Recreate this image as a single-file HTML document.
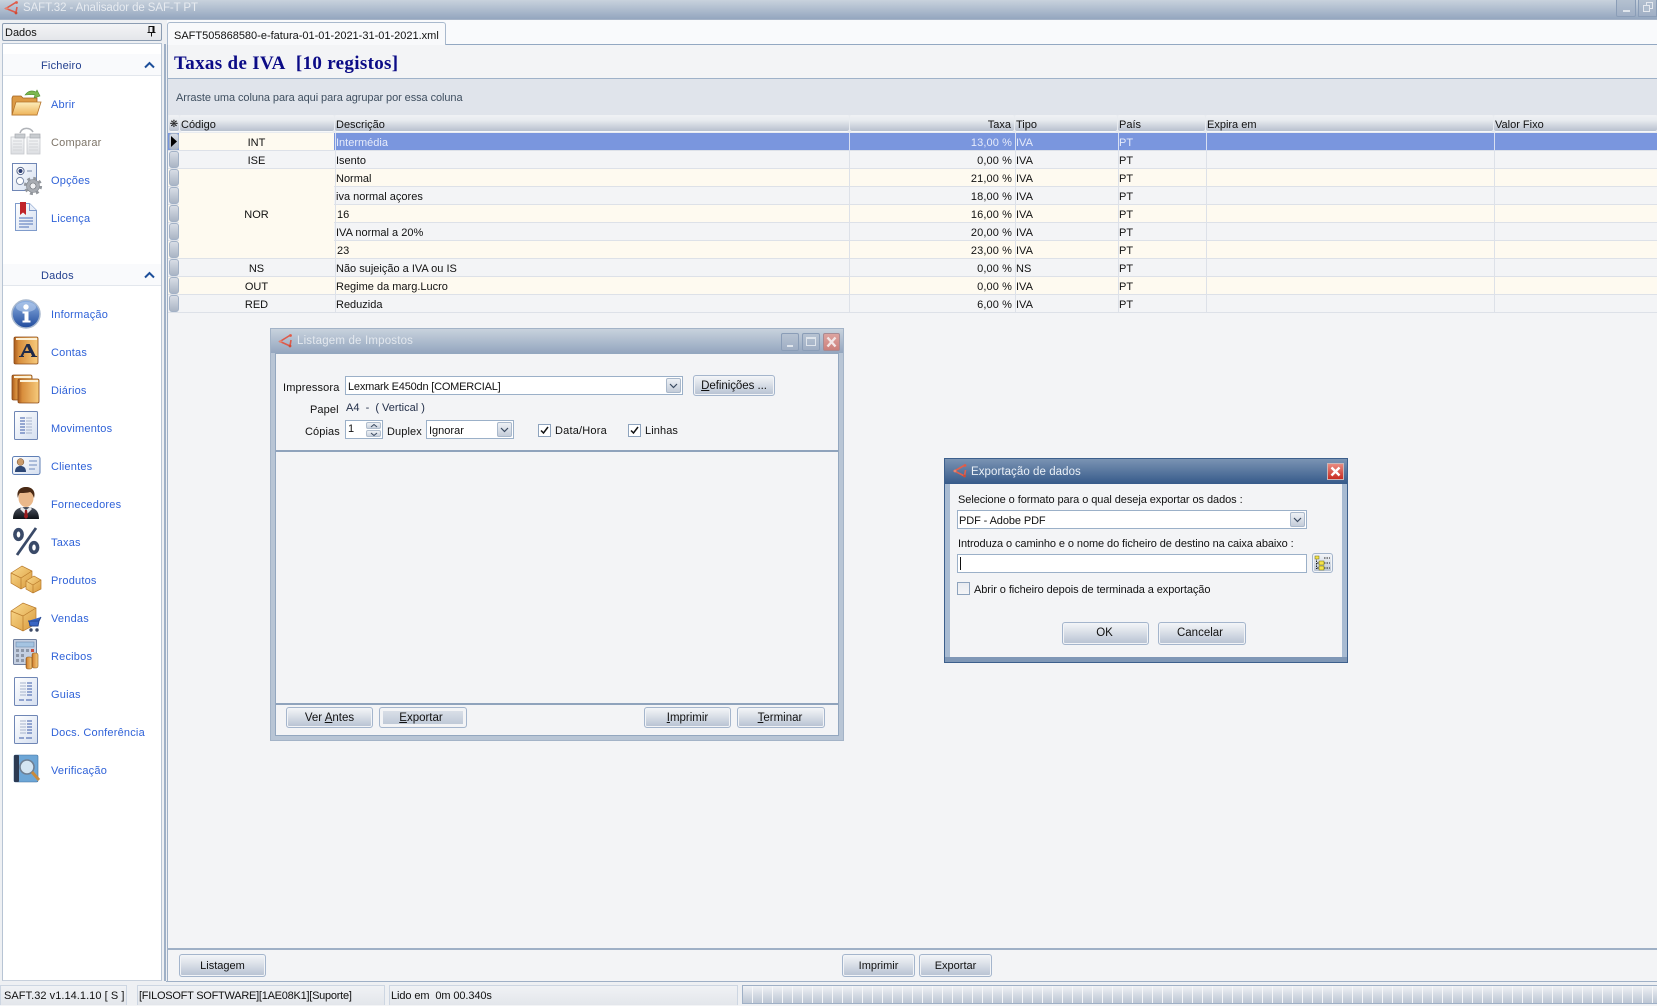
<!DOCTYPE html>
<html lang="pt"><head><meta charset="utf-8"><title>SAFT.32 - Analisador de SAF-T PT</title>
<style>
*{box-sizing:border-box}
html,body{margin:0;padding:0;width:1657px;height:1005px;overflow:hidden;background:#f3f4f6;font-family:"Liberation Sans",sans-serif;font-size:11px;color:#111}
.a{position:absolute}
.t{position:absolute;white-space:nowrap;line-height:14px}
.nav{position:absolute;left:51px;white-space:nowrap;line-height:14px;font-size:11px;letter-spacing:.2px;color:#2f62d8}
.hd{position:absolute;left:3px;width:158px;height:22px;background:#f9fafc;border-bottom:1px solid #e3e7ed}
.hdt{position:absolute;left:41px;white-space:nowrap;line-height:14px;font-size:11px;letter-spacing:.2px;color:#23408f}
.btn{position:absolute;border:1px solid #a4b5cc;border-radius:3px;background:linear-gradient(#f3f5f8,#dfe4eb 35%,#b6c1d2);box-shadow:inset 0 0 0 1px #f2f4f7;text-align:center;color:#111;white-space:nowrap;font-size:11.5px}
.btn u{text-decoration:underline}
.cmb{position:absolute;background:#fff;border:1px solid #9bb0c8;letter-spacing:-.2px}
.arr{position:absolute;right:1px;top:1px;bottom:1px;width:15px;border:1px solid #a9b8cb;border-radius:2px;background:linear-gradient(#eef1f5,#c3ccd9)}
.chk{position:absolute;width:13px;height:13px;border:1px solid #8ea3bd;background:#fff}
.hc{position:absolute;top:115px;height:17px;background:linear-gradient(#f0f2f5,#e8ebef 30%,#b4bdcb);border-radius:2px;line-height:20px;padding-left:1px;white-space:nowrap;color:#111;font-size:11px;box-shadow:0 -1px 0 #f7f8fa inset}
.r{position:absolute;left:168px;width:1489px;height:18px;border-bottom:1px solid #dde1e8;line-height:20px;white-space:nowrap;background:#f3f4f6}
.r.c{background:#fefaf0}
.r.s{background:#7a96de;color:#e6ebfa;border-bottom-color:#dde1e8}
.r i{position:absolute;top:0;bottom:-1px;width:1px;background:#dde1e8}
.r.s i{background:#d9e0f2}
.r span{position:absolute;top:0}
.sel{position:absolute;left:1px;top:0;width:10px;height:17px;background:linear-gradient(#d8dde5,#aab5c5);border:1px solid #a2b1c6;border-radius:3px}
.v1{left:167px}.v2{left:681px;}.v3{right:auto;left:847px}.v4{left:950px}.v5{left:1038px}.v6{left:1326px}
.taxa{left:682px;width:162px;text-align:right;letter-spacing:.1px}
.cod{position:absolute;left:11px;width:155px;top:0;height:17px;background:#fefaf0;text-align:center;color:#111}
.cg{background:#f3f4f6}
.st{position:absolute;top:985px;height:20px;background:linear-gradient(#f0f2f5,#e3e6eb);border:1px solid #cdd6e2;border-bottom:0;line-height:20px;white-space:nowrap;padding-left:3px;color:#111;font-size:11px}
</style></head><body>

<!-- main title bar -->
<div class="a" style="left:0;top:0;width:1657px;height:20px;background:linear-gradient(#c8d2dd,#94a6bf);border-bottom:1px solid #a5b3c6"></div>
<svg class="a" style="left:4px;top:0" width="16" height="16" viewBox="0 0 16 16"><path d="M12.5 2 L2 8.5 L12 12.5 L13 7" fill="none" stroke="#dd5a4a" stroke-width="1.6"/><circle cx="12.5" cy="2.5" r="1.4" fill="#e25a45"/><circle cx="2.5" cy="8.5" r="1.4" fill="#e8836e"/><circle cx="12" cy="13" r="1.4" fill="#d04a35"/></svg>
<div class="t" style="left:23px;top:1px;color:#e7ebf0;font-size:11.5px;letter-spacing:-.1px">SAFT.32 - Analisador de SAF-T PT</div>
<div class="a" style="left:1616px;top:0;width:20px;height:17px;border:1px solid #8a9db7;border-top:0;border-radius:0 0 2px 2px;background:linear-gradient(#b4c1d0,#a0afc5)"><div class="a" style="left:6px;top:10px;width:7px;height:2px;background:#dfe5ec"></div></div>
<div class="a" style="left:1638px;top:0;width:19px;height:17px;border:1px solid #8a9db7;border-top:0;background:linear-gradient(#b4c1d0,#a0afc5)"><div class="a" style="left:7px;top:2px;width:7px;height:7px;border:1px solid #e5e9ef"></div><div class="a" style="left:4px;top:5px;width:7px;height:7px;border:1px solid #e5e9ef;background:#aebccd"></div></div>

<!-- left strip -->
<div class="a" style="left:0;top:20px;width:167px;height:965px;background:#eef0f3"></div>
<div class="a" style="left:2px;top:23px;width:160px;height:18px;border:1px solid #8b9cb2;border-radius:2px;background:linear-gradient(#f3f4f6,#e4e6ea)"></div>
<div class="t" style="left:5px;top:26px;color:#111">Dados</div>
<svg class="a" style="left:147px;top:26px" width="9" height="11"><path d="M2 .5h5v6H2zM.5 6.500h8M4.500 7v3.500M6 1v5" fill="none" stroke="#111" stroke-width="1"/></svg>
<div class="a" style="left:2px;top:43px;width:160px;height:938px;background:#fff;border:1px solid #b7c4d4;border-bottom:1px solid #c7d0dc"></div>
<div class="a" style="left:164px;top:44px;width:2px;height:937px;background:#9fb0c6"></div>

<div class="hd" style="top:54px"></div>
<div class="hdt" style="top:59px">Ficheiro</div>
<svg class="a" style="left:144px;top:61px" width="11" height="8"><path d="M1 6.500 5.500 2 10 6.500" fill="none" stroke="#1d4f9a" stroke-width="2"/></svg>
<div class="hd" style="top:264px"></div>
<div class="hdt" style="top:269px">Dados</div>
<svg class="a" style="left:144px;top:271px" width="11" height="8"><path d="M1 6.500 5.500 2 10 6.500" fill="none" stroke="#1d4f9a" stroke-width="2"/></svg>

<div class="nav" style="top:98px">Abrir</div>
<div class="nav" style="top:136px;color:#7d7468">Comparar</div>
<div class="nav" style="top:174px">Opções</div>
<div class="nav" style="top:212px">Licença</div>
<div class="nav" style="top:308px">Informação</div>
<div class="nav" style="top:346px">Contas</div>
<div class="nav" style="top:384px">Diários</div>
<div class="nav" style="top:422px">Movimentos</div>
<div class="nav" style="top:460px">Clientes</div>
<div class="nav" style="top:498px">Fornecedores</div>
<div class="nav" style="top:536px">Taxas</div>
<div class="nav" style="top:574px">Produtos</div>
<div class="nav" style="top:612px">Vendas</div>
<div class="nav" style="top:650px">Recibos</div>
<div class="nav" style="top:688px">Guias</div>
<div class="nav" style="top:726px">Docs. Conferência</div>
<div class="nav" style="top:764px">Verificação</div>

<!-- sidebar icons -->
<svg class="a" style="left:0;top:0" width="60" height="800" viewBox="0 0 60 800">
<defs>
<linearGradient id="o" x1="0" y1="0" x2="0" y2="1"><stop offset="0" stop-color="#fdeebc"/><stop offset="1" stop-color="#eeb45a"/></linearGradient>
<linearGradient id="o2" x1="0" y1="0" x2="1" y2="0"><stop offset="0" stop-color="#a95a1c"/><stop offset=".2" stop-color="#d78d3c"/><stop offset="1" stop-color="#f7cb7c"/></linearGradient>
<linearGradient id="d" x1="0" y1="0" x2="1" y2="1"><stop offset="0" stop-color="#fff"/><stop offset="1" stop-color="#d5dff0"/></linearGradient>
<linearGradient id="b" x1="0" y1="0" x2="0" y2="1"><stop offset="0" stop-color="#8fb2e2"/><stop offset="1" stop-color="#1f4a9c"/></linearGradient>
<linearGradient id="g" x1="0" y1="0" x2="0" y2="1"><stop offset="0" stop-color="#f7f8f9"/><stop offset="1" stop-color="#dcdee2"/></linearGradient>
<linearGradient id="s" x1="0" y1="0" x2="0" y2="1"><stop offset="0" stop-color="#4d5462"/><stop offset="1" stop-color="#0e1116"/></linearGradient>
<linearGradient id="k" x1="0" y1="0" x2="1" y2="1"><stop offset="0" stop-color="#fbdb8f"/><stop offset="1" stop-color="#d99a3c"/></linearGradient>
</defs>
<!-- Abrir -->
<path d="M12 115V98l1-2h8l2 2h14v17z" fill="#dc9a45" stroke="#a1621f" stroke-width=".8"/>
<path d="M12 115l4-13h25l-4 13z" fill="url(#o)" stroke="#b4732a" stroke-width=".8"/>
<path d="M25 95c3-4 7-5 11-3l1-2 3 6-6 2 1-3c-3-1-6 0-10 0z" fill="#7db84f" stroke="#4e8a30" stroke-width=".6"/>
<!-- Comparar -->
<g fill="url(#g)" stroke="#c6c9ce" stroke-width=".8"><rect x="11" y="137" width="13" height="17"/><rect x="27" y="137" width="13" height="17"/></g>
<g stroke="#d2d4d8" stroke-width="1"><path d="M13 141h9M13 144h9M13 147h9M13 150h9M29 141h9M29 144h9M29 147h9M29 150h9"/></g>
<rect x="15" y="134" width="10" height="4" fill="#c9ccd0" stroke="#a6a9af" stroke-width=".7"/><rect x="30" y="134" width="10" height="4" fill="#c9ccd0" stroke="#a6a9af" stroke-width=".7"/>
<path d="M20 133c2-6 10-6 13-1" fill="none" stroke="#b0b3b8" stroke-width="1.600"/>
<!-- Opções -->
<rect x="12.500" y="163.500" width="24" height="27" fill="url(#d)" stroke="#6f86b5"/>
<circle cx="20.500" cy="171" r="3.600" fill="#fff" stroke="#5a6b90"/><circle cx="20.500" cy="171" r="2" fill="#2b3c70"/><circle cx="20" cy="181" r="3.600" fill="#fff" stroke="#7a8aa8"/>
<path d="M27 171h5" stroke="#7a8aa8"/>
<circle cx="33" cy="186" r="6.500" fill="#a8acb2" stroke="#7b8086" stroke-width=".6"/>
<circle cx="33" cy="186" r="7.800" fill="none" stroke="#93979d" stroke-width="2.600" stroke-dasharray="3 3.130"/>
<circle cx="33" cy="186" r="3" fill="#f0f1f3" stroke="#6a6f75" stroke-width=".6"/>
<!-- Licença -->
<path d="M15.500 203.500h14l7 7v20h-21z" fill="url(#d)" stroke="#7f9bcb"/>
<path d="M29.500 203.500v7h7" fill="#e8eef8" stroke="#7f9bcb"/>
<path d="M20 202h6v13l-3-2.500-3 2.500z" fill="#c0242a"/>
<path d="M19 218h14M19 221h14M19 224h14M19 227h10" stroke="#4d70b8"/>
<!-- Informação -->
<circle cx="26" cy="314" r="14" fill="url(#b)" stroke="#a8b8ce" stroke-width="1.500"/>
<ellipse cx="26" cy="307" rx="10" ry="5" fill="#bcd2f0" opacity=".55"/>
<circle cx="26" cy="307" r="2.700" fill="#fff"/><path d="M22.500 311.500h6v9h2v2h-8v-2h2v-7h-2z" fill="#fff"/>
<!-- Contas -->
<rect x="14" y="337" width="24" height="27" rx="1.500" fill="url(#o2)" stroke="#8a4a18" stroke-width=".8"/><rect x="16" y="338" width="21" height="2" fill="#fdf2d8"/>
<path d="M26.500 344l-6 12h-1.500v1h5v-1h-1l1.300-3h6.500l1.300 3h-1v1h6v-1h-1.500l-6-12zM25 351l2-4.500 2 4.500z" fill="#1f2a4a" fill-rule="evenodd"/>
<!-- Diários -->
<rect x="12" y="375" width="20" height="25" rx="1.500" fill="url(#o2)" stroke="#8a4a18" stroke-width=".8"/><rect x="14" y="376" width="17" height="2" fill="#fdf2d8"/>
<rect x="18" y="379" width="21" height="24" rx="1.500" fill="url(#o2)" stroke="#8a4a18" stroke-width=".8"/><rect x="20" y="380" width="18" height="2" fill="#fdf2d8"/>
<!-- Movimentos -->
<rect x="14.500" y="411.500" width="23" height="28" rx="1" fill="url(#d)" stroke="#6f86b5"/>
<g stroke="#3a5aa8"><path d="M20 418h5M20 421h5M20 424h5M20 427h5M20 430h5M20 433h5"/></g><g stroke="#a6b3cc"><path d="M26 418h6M26 421h6M26 424h6M26 427h6M26 430h6M26 433h6"/></g>
<!-- Clientes -->
<rect x="12.500" y="456.500" width="27.500" height="18" rx="2" fill="url(#d)" stroke="#5f7fb5"/>
<circle cx="20.500" cy="462" r="3.400" fill="#c99b6c" stroke="#6a4526" stroke-width=".5"/><path d="M15 472c0-5 3-6 5.500-6s5.500 1 5.500 6z" fill="#2d4775"/>
<path d="M29 461h8M29 465h8M29 469h6" stroke="#6c89bd"/>
<!-- Fornecedores -->
<path d="M13 519c0-9 5-12 13-12s13 3 13 12z" fill="url(#s)"/>
<path d="M22 507l4 3 4-3 2 2-6 6-6-6z" fill="#e8e8ea"/><path d="M25 510h2l1 7-2 2-2-2z" fill="#9a1b1e"/>
<ellipse cx="26" cy="498" rx="7.500" ry="9" fill="#eab88a"/><path d="M18 498c-2-7 2-11 8-11s10 4 8 11c-1-3-2-5-4-6-3 1-8 1-10 1-1 1-2 3-2 5z" fill="#4a2a15"/>
<!-- Taxas -->
<g fill="none" stroke="#3a4a68" stroke-width="3.600"><ellipse cx="18.500" cy="534.500" rx="3.600" ry="4.800"/><ellipse cx="34" cy="547.500" rx="3.600" ry="4.800"/></g><path d="M36 528 17 555" stroke="#3a4a68" stroke-width="2.800"/>
<!-- Produtos -->
<path d="M11 573l11-7 10 5v12l-11 6-10-6z" fill="url(#k)" stroke="#b8792a" stroke-width=".7"/><path d="M11 573l10 5 11-7M21 578v11" fill="none" stroke="#b8792a" stroke-width=".7"/>
<path d="M26 581l8-5 7 4v9l-8 4-7-4z" fill="url(#k)" stroke="#b8792a" stroke-width=".7"/><path d="M26 581l7 4 8-5M33 585v8" fill="none" stroke="#b8792a" stroke-width=".7"/>
<!-- Vendas -->
<path d="M11 611l12-8 13 5v16l-13 7-12-6z" fill="url(#k)" stroke="#b8792a" stroke-width=".7"/><path d="M11 611l12 5 13-8M23 616v15" fill="none" stroke="#b8792a" stroke-width=".7"/>
<path d="M28 621h11l2-4M29 621l1 5h8l1-5" fill="#3a66c4" stroke="#24458f" stroke-width="1"/><circle cx="31" cy="630" r="1.700" fill="#3d4a66"/><circle cx="37" cy="630" r="1.700" fill="#3d4a66"/>
<!-- Recibos -->
<rect x="13.500" y="639.500" width="23" height="25" rx="1" fill="#c5d0e2" stroke="#6f7f9e"/><rect x="16" y="642" width="18" height="5" fill="#a5c4e2" stroke="#6f8cb0" stroke-width=".6"/>
<g fill="#8d97a8"><rect x="16" y="649" width="3" height="3"/><rect x="21" y="649" width="3" height="3"/><rect x="26" y="649" width="3" height="3"/><rect x="16" y="654" width="3" height="3"/><rect x="21" y="654" width="3" height="3"/><rect x="16" y="659" width="3" height="3"/><rect x="21" y="659" width="3" height="3"/></g><rect x="31" y="649" width="3" height="3" fill="#cc4a3a"/>
<rect x="26" y="657" width="6" height="12" rx="2" fill="url(#o2)" stroke="#8a5a1c" stroke-width=".6"/><rect x="32" y="653" width="6" height="15" rx="2" fill="url(#o2)" stroke="#8a5a1c" stroke-width=".6"/>
<!-- Guias / Docs -->
<rect x="14.500" y="677.500" width="23" height="28" rx="1" fill="url(#d)" stroke="#6f86b5"/>
<g stroke="#a6b3cc"><path d="M20 683h6M20 686h6M20 689h6M20 692h6M20 695h6"/></g><g stroke="#3a5aa8"><path d="M27 683h5M27 686h5M27 689h5M27 692h5M27 695h5M19 700h5M26 700h6"/></g>
<rect x="14.500" y="715.500" width="23" height="28" rx="1" fill="url(#d)" stroke="#6f86b5"/>
<g stroke="#a6b3cc"><path d="M20 721h6M20 724h6M20 727h6M20 730h6M20 733h6"/></g><g stroke="#3a5aa8"><path d="M27 721h5M27 724h5M27 727h5M27 730h5M27 733h5M19 738h5M26 738h6"/></g>
<!-- Verificação -->
<rect x="14" y="755" width="24" height="27" rx="1.500" fill="#6da6d6" stroke="#3f6f9e" stroke-width=".6"/><rect x="14" y="755" width="5" height="27" rx="1" fill="#2c3a52"/>
<circle cx="27" cy="767" r="7" fill="#d4e5f2" stroke="#6f7f92" stroke-width="1.600"/><path d="M32 772l7 8" stroke="#c98a3a" stroke-width="3"/>
</svg>

<!-- tab strip / main -->
<div class="a" style="left:167px;top:20px;width:1490px;height:24px;background:#f9fafc"></div>
<div class="a" style="left:167px;top:44px;width:1490px;height:1px;background:#93a8c2"></div>
<div class="a" style="left:167px;top:22px;width:279px;height:23px;background:#f8f9fb;border:1px solid #a9b9cd;border-bottom:0;border-radius:3px 3px 0 0"></div>
<div class="t" style="left:174px;top:29px;color:#111">SAFT505868580-e-fatura-01-01-2021-31-01-2021.xml</div>
<div class="a" style="left:167px;top:45px;width:1px;height:937px;background:#9fb0c6"></div>
<div class="t" style="left:174px;top:53px;line-height:22px;font-family:'Liberation Serif',serif;font-weight:bold;font-size:19px;letter-spacing:.33px;color:#0b0b86">Taxas de IVA&nbsp; [10 registos]</div>
<div class="a" style="left:168px;top:78px;width:1489px;height:1px;background:#9fb2c9"></div>
<div class="a" style="left:168px;top:79px;width:1489px;height:36px;background:#e0e4eb"></div>
<div class="t" style="left:176px;top:91px;color:#3f4f60;letter-spacing:-.08px">Arraste uma coluna para aqui para agrupar por essa coluna</div>

<!-- grid header -->
<div class="a" style="left:168px;top:115px;width:1489px;height:18px;background:#e9ecf0"></div>
<div class="hc" style="left:169px;width:10px;padding:0;text-align:center;font-size:10px">❋</div>
<div class="hc" style="left:180px;width:154px">Código</div>
<div class="hc" style="left:335px;width:514px">Descrição</div>
<div class="hc" style="left:850px;width:164px;text-align:right;padding-right:3px">Taxa</div>
<div class="hc" style="left:1015px;width:102px">Tipo</div>
<div class="hc" style="left:1118px;width:87px">País</div>
<div class="hc" style="left:1206px;width:287px">Expira em</div>
<div class="hc" style="left:1494px;width:163px">Valor Fixo</div>

<!-- grid rows -->
<div class="r s" style="top:133px"><div class="sel"></div><div class="cod">INT</div><span style="left:168px">Intermédia</span><span class="taxa">13,00 %</span><span style="left:848px">IVA</span><span style="left:951px">PT</span><i class="v1"></i><i class="v2"></i><i class="v3"></i><i class="v4"></i><i class="v5"></i><i class="v6"></i></div>
<svg class="a" style="left:171px;top:136px" width="6" height="11"><path d="M0 0l6 5.500-6 5.500z" fill="#000"/></svg>
<div class="r" style="top:151px"><div class="sel"></div><div class="cod cg">ISE</div><span style="left:168px">Isento</span><span class="taxa">0,00 %</span><span style="left:848px">IVA</span><span style="left:951px">PT</span><i class="v1"></i><i class="v2"></i><i class="v3"></i><i class="v4"></i><i class="v5"></i><i class="v6"></i></div>
<div class="r c" style="top:169px"><div class="sel"></div><span style="left:168px">Normal</span><span class="taxa">21,00 %</span><span style="left:848px">IVA</span><span style="left:951px">PT</span><i class="v1"></i><i class="v2"></i><i class="v3"></i><i class="v4"></i><i class="v5"></i><i class="v6"></i></div>
<div class="r" style="top:187px"><div class="sel"></div><span style="left:168px">iva normal açores</span><span class="taxa">18,00 %</span><span style="left:848px">IVA</span><span style="left:951px">PT</span><i class="v1"></i><i class="v2"></i><i class="v3"></i><i class="v4"></i><i class="v5"></i><i class="v6"></i></div>
<div class="r c" style="top:205px"><div class="sel"></div><span style="left:169px">16</span><span class="taxa">16,00 %</span><span style="left:848px">IVA</span><span style="left:951px">PT</span><i class="v1"></i><i class="v2"></i><i class="v3"></i><i class="v4"></i><i class="v5"></i><i class="v6"></i></div>
<div class="r" style="top:223px"><div class="sel"></div><span style="left:168px">IVA normal a 20%</span><span class="taxa">20,00 %</span><span style="left:848px">IVA</span><span style="left:951px">PT</span><i class="v1"></i><i class="v2"></i><i class="v3"></i><i class="v4"></i><i class="v5"></i><i class="v6"></i></div>
<div class="r c" style="top:241px"><div class="sel"></div><span style="left:169px">23</span><span class="taxa">23,00 %</span><span style="left:848px">IVA</span><span style="left:951px">PT</span><i class="v1"></i><i class="v2"></i><i class="v3"></i><i class="v4"></i><i class="v5"></i><i class="v6"></i></div>
<div class="a" style="left:179px;top:169px;width:155px;height:89px;background:#fefaf0;text-align:center;line-height:92px;overflow:hidden">NOR</div>
<div class="r" style="top:259px"><div class="sel"></div><div class="cod cg">NS</div><span style="left:168px">Não sujeição a IVA ou IS</span><span class="taxa">0,00 %</span><span style="left:848px">NS</span><span style="left:951px">PT</span><i class="v1"></i><i class="v2"></i><i class="v3"></i><i class="v4"></i><i class="v5"></i><i class="v6"></i></div>
<div class="r c" style="top:277px"><div class="sel"></div><div class="cod">OUT</div><span style="left:168px">Regime da marg.Lucro</span><span class="taxa">0,00 %</span><span style="left:848px">IVA</span><span style="left:951px">PT</span><i class="v1"></i><i class="v2"></i><i class="v3"></i><i class="v4"></i><i class="v5"></i><i class="v6"></i></div>
<div class="r" style="top:295px"><div class="sel"></div><div class="cod cg">RED</div><span style="left:168px">Reduzida</span><span class="taxa">6,00 %</span><span style="left:848px">IVA</span><span style="left:951px">PT</span><i class="v1"></i><i class="v2"></i><i class="v3"></i><i class="v4"></i><i class="v5"></i><i class="v6"></i></div>

<!-- bottom bar -->
<div class="a" style="left:168px;top:948px;width:1489px;height:2px;background:#9fb0c6"></div>
<div class="btn" style="left:179px;top:954px;width:87px;height:23px;line-height:22px;font-size:11px">Listagem</div>
<div class="btn" style="left:842px;top:954px;width:73px;height:23px;line-height:22px;font-size:11px">Imprimir</div>
<div class="btn" style="left:919px;top:954px;width:73px;height:23px;line-height:22px;font-size:11px">Exportar</div>
<div class="a" style="left:166px;top:981px;width:1491px;height:1px;background:#9fb0c6"></div>

<!-- status bar -->
<div class="a" style="left:0;top:982px;width:1657px;height:23px;background:#eef0f3"></div>
<div class="st" style="left:0;width:127px;padding-left:3px;letter-spacing:.05px">SAFT.32 v1.14.1.10 [ S ]</div>
<div class="st" style="left:137px;width:248px;padding-left:1px;letter-spacing:-.25px">[FILOSOFT SOFTWARE][1AE08K1][Suporte]</div>
<div class="st" style="left:389px;width:349px;padding-left:1px;letter-spacing:-.1px">Lido em&nbsp; 0m 00.340s</div>
<div class="a" style="left:742px;top:985px;width:915px;height:19px;border:1px solid #9fb0c6;border-right:0;background:repeating-linear-gradient(90deg,transparent 0 9px,#f5f6f8 9px 10px),linear-gradient(#f0f2f5,#d5dbe4 50%,#bcc6d4)"></div>

<!-- Listagem de Impostos dialog -->
<div class="a" style="left:270px;top:328px;width:574px;height:413px;background:#b8c5d5;border:1px solid #a3b3c7"></div>
<div class="a" style="left:271px;top:329px;width:572px;height:24px;background:linear-gradient(#c8d2dd,#94a6bf)"></div>
<svg class="a" style="left:278px;top:333px" width="16" height="16" viewBox="0 0 16 16"><path d="M12.500 2 L2 8.500 L12 13 L13 7" fill="none" stroke="#dd5a4a" stroke-width="1.600"/><circle cx="12.500" cy="2.500" r="1.400" fill="#e25a45"/><circle cx="2.500" cy="8.500" r="1.400" fill="#e8836e"/><circle cx="12" cy="13" r="1.400" fill="#d04a35"/></svg>
<div class="t" style="left:297px;top:334px;color:#e3e8ee;font-size:11.500px;letter-spacing:.18px">Listagem de Impostos</div>
<div class="a" style="left:781px;top:333px;width:18px;height:18px;border:1px solid #8a9db7;border-radius:2px;background:linear-gradient(#b7c3d2,#9faec4)"><div class="a" style="left:5px;top:11px;width:6px;height:2px;background:#dfe5ec"></div></div>
<div class="a" style="left:802px;top:333px;width:18px;height:18px;border:1px solid #8a9db7;border-radius:2px;background:linear-gradient(#b7c3d2,#9faec4)"><div class="a" style="left:3px;top:3px;width:10px;height:9px;border:1px solid #dfe5ec;border-top-width:2px"></div></div>
<div class="a" style="left:823px;top:333px;width:17px;height:18px;border:1px solid #a88a92;border-radius:2px;background:linear-gradient(#dda4a0,#cc7f7a)"></div>
<svg class="a" style="left:826px;top:336px" width="12" height="12"><path d="M1.500 1.500l8 9M9.500 1.500l-8 9" stroke="#f2e6e6" stroke-width="2.400"/></svg>
<div class="a" style="left:275px;top:353px;width:564px;height:383px;background:#f3f4f6;border:1px solid #93a7bf"></div>
<div class="a" style="left:276px;top:450px;width:562px;height:2px;background:#8fa3bc"></div>
<div class="a" style="left:276px;top:703px;width:562px;height:2px;background:#8fa3bc"></div>
<div class="t" style="left:283px;top:381px;letter-spacing:.15px">Impressora</div>
<div class="cmb" style="left:345px;top:376px;width:338px;height:19px;line-height:20px;padding-left:2px;white-space:nowrap">Lexmark E450dn [COMERCIAL]<div class="arr"></div></div>
<svg class="a" style="left:669px;top:383px" width="9" height="6"><path d="M1 1l3.500 3.500L8 1" fill="none" stroke="#3a4a60" stroke-width="1.200"/></svg>
<div class="btn" style="left:693px;top:375px;width:82px;height:21px;line-height:20px;letter-spacing:-.05px"><u>D</u>efinições ...</div>
<div class="t" style="left:310px;top:403px;letter-spacing:.1px">Papel</div>
<div class="t" style="left:346px;top:401px;color:#24304a">A4&nbsp; -&nbsp; ( Vertical )</div>
<div class="t" style="left:305px;top:425px;letter-spacing:.1px">Cópias</div>
<div class="cmb" style="left:345px;top:420px;width:38px;height:19px;line-height:17px;padding-left:2px">1</div>
<div class="a" style="left:366px;top:422px;width:15px;height:7px;border:1px solid #b0bdcd;border-radius:2px;background:linear-gradient(#eef1f5,#c9d1dd)"></div>
<div class="a" style="left:366px;top:430px;width:15px;height:7px;border:1px solid #b0bdcd;border-radius:2px;background:linear-gradient(#eef1f5,#c9d1dd)"></div>
<svg class="a" style="left:370px;top:423px" width="8" height="14"><path d="M1 4l3-2.500L7 4M1 10l3 2.500L7 10" fill="none" stroke="#3a4a60"/></svg>
<div class="t" style="left:387px;top:425px;letter-spacing:.1px">Duplex</div>
<div class="cmb" style="left:426px;top:420px;width:88px;height:19px;line-height:20px;padding-left:2px;letter-spacing:0">Ignorar<div class="arr"></div></div>
<svg class="a" style="left:500px;top:427px" width="9" height="6"><path d="M1 1l3.500 3.500L8 1" fill="none" stroke="#3a4a60" stroke-width="1.200"/></svg>
<div class="chk" style="left:538px;top:424px"></div>
<svg class="a" style="left:540px;top:426px" width="9" height="9"><path d="M1 4.500l2.500 2.500L8 1" fill="none" stroke="#111" stroke-width="1.500"/></svg>
<div class="t" style="left:555px;top:424px;letter-spacing:.2px">Data/Hora</div>
<div class="chk" style="left:628px;top:424px"></div>
<svg class="a" style="left:630px;top:426px" width="9" height="9"><path d="M1 4.500l2.500 2.500L8 1" fill="none" stroke="#111" stroke-width="1.500"/></svg>
<div class="t" style="left:645px;top:424px;letter-spacing:.1px">Linhas</div>
<div class="btn" style="left:286px;top:707px;width:87px;height:21px;line-height:20px">Ver <u>A</u>ntes</div>
<div class="btn" style="left:379px;top:707px;width:88px;height:21px;line-height:20px;padding-right:4px;background:linear-gradient(#dfe4eb,#b9c4d4);box-shadow:inset 0 0 0 3px #f3f4f6"><u>E</u>xportar</div>
<div class="btn" style="left:644px;top:707px;width:87px;height:21px;line-height:20px"><u>I</u>mprimir</div>
<div class="btn" style="left:737px;top:707px;width:88px;height:21px;line-height:20px;padding-right:2px"><u>T</u>erminar</div>

<!-- Exportação de dados dialog -->
<div class="a" style="left:944px;top:458px;width:404px;height:205px;background:#a8bbd2;border:1px solid #3c5f8c"></div>
<div class="a" style="left:945px;top:459px;width:402px;height:25px;background:linear-gradient(#7a93b3,#365a8a)"></div>
<div class="a" style="left:945px;top:657px;width:402px;height:5px;background:#7f97b6"></div>
<svg class="a" style="left:952px;top:463px" width="17" height="16" viewBox="0 0 16 16"><path d="M12.500 2 L2 8 L12 13 L13 7" fill="none" stroke="#e2604c" stroke-width="1.600"/><circle cx="12.500" cy="2.500" r="1.400" fill="#e25a45"/><circle cx="2.500" cy="8" r="1.400" fill="#e8836e"/><circle cx="12" cy="13" r="1.400" fill="#d04a35"/></svg>
<div class="t" style="left:971px;top:465px;color:#eaf0f7;font-size:11.500px;letter-spacing:.06px">Exportação de dados</div>
<div class="a" style="left:1327px;top:463px;width:17px;height:17px;border:1px solid #c9b6b8;background:linear-gradient(#e88a80,#c92d22)"></div>
<svg class="a" style="left:1330px;top:466px" width="11" height="11"><path d="M1.500 1.500l8 8M9.500 1.500l-8 8" stroke="#fff" stroke-width="2.400"/></svg>
<div class="a" style="left:950px;top:484px;width:392px;height:173px;background:#f3f4f6"></div>
<div class="t" style="left:958px;top:493px;letter-spacing:-.07px">Selecione o formato para o qual deseja exportar os dados :</div>
<div class="cmb" style="left:957px;top:510px;width:350px;height:19px;line-height:20px;padding-left:1px;letter-spacing:-.1px">PDF - Adobe PDF<div class="arr"></div></div>
<svg class="a" style="left:1293px;top:517px" width="9" height="6"><path d="M1 1l3.500 3.500L8 1" fill="none" stroke="#3a4a60" stroke-width="1.200"/></svg>
<div class="t" style="left:958px;top:537px;letter-spacing:-.09px">Introduza o caminho e o nome do ficheiro de destino na caixa abaixo :</div>
<div class="cmb" style="left:957px;top:554px;width:350px;height:19px"><div class="a" style="left:2px;top:2px;width:1px;height:13px;background:#111"></div></div>
<div class="btn" style="left:1312px;top:553px;width:21px;height:20px"></div>
<svg class="a" style="left:1314px;top:555px" width="18" height="17"><path d="M2.500 3v11M3 8h5M3 13h5M10 3h6M10 8h6M10 13h6" stroke="#222" stroke-dasharray="1.500 1" fill="none"/><rect x="1" y="1" width="4" height="3" fill="#f5e34a" stroke="#6a6a10" stroke-width=".5"/><rect x="5" y="6" width="5" height="4" fill="#f5e34a" stroke="#6a6a10" stroke-width=".5"/><rect x="5" y="11" width="5" height="4" fill="#f5e34a" stroke="#6a6a10" stroke-width=".5"/></svg>
<div class="chk" style="left:957px;top:582px;background:linear-gradient(#e8ebf0,#f3f4f6)"></div>
<div class="t" style="left:974px;top:583px;letter-spacing:-.08px">Abrir o ficheiro depois de terminada a exportação</div>
<div class="btn" style="left:1062px;top:622px;width:87px;height:23px;line-height:21px;padding-right:2px">OK</div>
<div class="btn" style="left:1158px;top:622px;width:88px;height:23px;line-height:21px;padding-right:4px">Cancelar</div>

</body></html>
